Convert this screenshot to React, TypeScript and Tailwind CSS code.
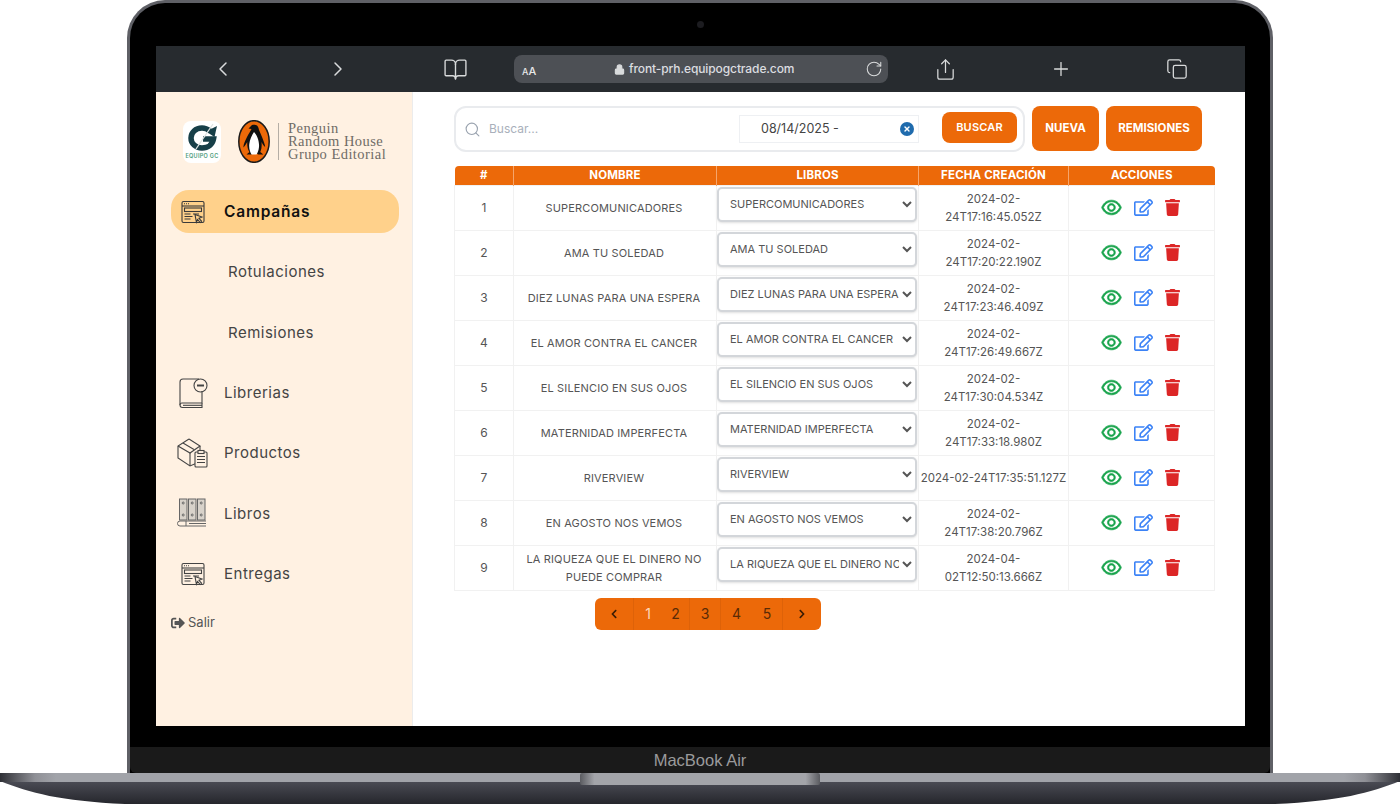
import React from "react";
import { ChevronLeft, ChevronRight, BookOpen, Share, Plus, Copy, RotateCw, Lock, Search, X } from "lucide-react";
import { AiOutlineEye } from "react-icons/ai";
import { FaRegEdit, FaTrash, FaSignOutAlt, FaChevronLeft, FaChevronRight } from "react-icons/fa";

const font = "font-['Inter','Liberation_Sans',sans-serif]";

const rows = [
  { n: 1, name: ["SUPERCOMUNICADORES"], sel: "SUPERCOMUNICADORES", date: ["2024-02-", "24T17:16:45.052Z"] },
  { n: 2, name: ["AMA TU SOLEDAD"], sel: "AMA TU SOLEDAD", date: ["2024-02-", "24T17:20:22.190Z"] },
  { n: 3, name: ["DIEZ LUNAS PARA UNA ESPERA"], sel: "DIEZ LUNAS PARA UNA ESPERA", date: ["2024-02-", "24T17:23:46.409Z"] },
  { n: 4, name: ["EL AMOR CONTRA EL CANCER"], sel: "EL AMOR CONTRA EL CANCER", date: ["2024-02-", "24T17:26:49.667Z"] },
  { n: 5, name: ["EL SILENCIO EN SUS OJOS"], sel: "EL SILENCIO EN SUS OJOS", date: ["2024-02-", "24T17:30:04.534Z"] },
  { n: 6, name: ["MATERNIDAD IMPERFECTA"], sel: "MATERNIDAD IMPERFECTA", date: ["2024-02-", "24T17:33:18.980Z"] },
  { n: 7, name: ["RIVERVIEW"], sel: "RIVERVIEW", date: ["2024-02-24T17:35:51.127Z"] },
  { n: 8, name: ["EN AGOSTO NOS VEMOS"], sel: "EN AGOSTO NOS VEMOS", date: ["2024-02-", "24T17:38:20.796Z"] },
  { n: 9, name: ["LA RIQUEZA QUE EL DINERO NO", "PUEDE COMPRAR"], sel: "LA RIQUEZA QUE EL DINERO NO PUEDE COMPRAR", date: ["2024-04-", "02T12:50:13.666Z"] },
];

function WindowIcon({ color = "#3a3a3a" }: { color?: string }) {
  return (
    <svg width="24" height="24" viewBox="0 0 24 24" fill="none" stroke={color} strokeWidth="1.1">
      <rect x="1" y="1.5" width="22" height="21" rx="1.5" />
      <path d="M1 6h22" />
      <path d="M3 3.8h1M5 3.8h1M7 3.8h1" />
      <rect x="3.5" y="8" width="17" height="3.5" />
      <path d="M3.5 14h6M3.5 16.5h8M3.5 19h6M12 14h6" />
      <path d="M14 14.5l7 2.6-3 1.2 2.6 3-1.4 1.2-2.6-3-1.2 2.6z" fill="none" />
    </svg>
  );
}

function BookMinusIcon() {
  return (
    <svg width="30" height="32" viewBox="0 0 30 32" fill="none" stroke="#444" strokeWidth="1.1">
      <path d="M21 2H5a3 3 0 0 0-3 3v23" />
      <path d="M2 28a2 2 0 0 1 2-2h20v-12" />
      <path d="M2 28a2.5 2.5 0 0 0 2.5 2.5H24V26" />
      <path d="M5 28.3h19" />
      <circle cx="22.5" cy="8.5" r="6.5" />
      <path d="M19 8.5h7" strokeWidth="2" />
    </svg>
  );
}

function BoxIcon() {
  return (
    <svg width="31" height="30" viewBox="0 0 31 30" fill="none" stroke="#444" strokeWidth="1.1">
      <path d="M12 1L1 8v12l12 8 7-3" />
      <path d="M1 8l12 7 10-7L12 1" />
      <path d="M13 15v13M23 8v6M6 5l11 6.5" />
      <rect x="18" y="14" width="12" height="15" rx="1" fill="#fff1e2" />
      <rect x="21" y="12.5" width="6" height="3" fill="#fff1e2" />
      <path d="M20 18.5h8M20 21.5h8M20 24.5h8" />
    </svg>
  );
}

function BooksIcon() {
  return (
    <svg width="30" height="30" viewBox="0 0 30 30" fill="none" stroke="#666" strokeWidth="1">
      <rect x="2.5" y="1" width="7.5" height="21" fill="#d8d2ca" />
      <rect x="11.5" y="1" width="7.5" height="21" fill="#d8d2ca" />
      <rect x="20.5" y="1" width="7.5" height="21" fill="#d8d2ca" />
      <circle cx="6.2" cy="5" r="1" /><circle cx="15.2" cy="5" r="1" /><circle cx="24.2" cy="5" r="1" />
      <circle cx="6.2" cy="17" r="1" /><circle cx="15.2" cy="17" r="1" /><circle cx="24.2" cy="17" r="1" />
      <path d="M29 23H3a2.5 2.5 0 0 0 0 5h26M9 23v5M12 25.5h17" />
    </svg>
  );
}

function GLogo() {
  return (
    <div className="w-[38px] h-[42px] bg-white rounded-lg flex flex-col items-center pt-[2px]">
      <svg width="32" height="30" viewBox="0 0 32 30" fill="none">
        <path d="M24 8C21.500 6 19 5 16 5 9.500 5 5 9.500 5 15s4.500 10 11 10c6 0 10.500-3.500 11.500-9H17" stroke="#173f48" strokeWidth="5.500" />
        <path d="M20 8.500L31 3l-2.500 11z" fill="#173f48" />
        <path d="M10 26L27 1" stroke="#dfe4e3" strokeWidth="1.3" />
      </svg>
      <span className={`text-[5.500px] leading-[7px] font-semibold text-[#4f9c7c] tracking-[0.3px] whitespace-nowrap ${font}`}>EQUIPO GC</span>
    </div>
  );
}

function PenguinLogo() {
  return (
    <svg width="32" height="43" viewBox="0 0 32 43">
      <ellipse cx="16" cy="21.500" rx="15.200" ry="20.800" fill="#ec6909" stroke="#1a1a1a" strokeWidth="1.500" />
      <path d="M14 5c3-1 6 0 6.500 3 .3 2 2 5 3.500 9 1.200 3.500 3 7 3.200 10-1.500-1-3-3.500-3.700-5 .4 4 .1 7-1.200 10l3 2.500h-5l-1.500-1h-4l-1.300 1H8.500l3-2.500C9.500 29 9 25 9.300 22c-1 1.500-2.300 4-4 5.500.2-3.500 2.200-7.500 3.700-10.500C10.500 14 12.500 11 13.500 9L10.500 8.500z" fill="#111" />
      <path d="M16 12c3 3 5.500 9 5 15-.3 3.500-1.500 6-2.500 7.500h-5C12 32 10.800 28 11.300 24c.4-4.500 2.700-9 4.700-12z" fill="#fff" />
    </svg>
  );
}

function BaseDrawing() {
  return (
    <svg width="1400" height="31" viewBox="0 0 1400 31" className="block">
      <defs>
        <linearGradient id="bodyG" x1="0" y1="0" x2="0" y2="1">
          <stop offset="0" stopColor="#4b4c55" />
          <stop offset="1" stopColor="#25262c" />
        </linearGradient>
        <linearGradient id="topG" x1="0" y1="0" x2="1" y2="0">
          <stop offset="0" stopColor="#2f3036" />
          <stop offset="0.025" stopColor="#8f9096" />
          <stop offset="0.04" stopColor="#a1a3a9" />
          <stop offset="0.96" stopColor="#a1a3a9" />
          <stop offset="0.975" stopColor="#8f9096" />
          <stop offset="1" stopColor="#2f3036" />
        </linearGradient>
        <linearGradient id="notchG" x1="0" y1="0" x2="1" y2="0">
          <stop offset="0" stopColor="#5a5b60" />
          <stop offset="0.06" stopColor="#a3a4a9" />
          <stop offset="0.94" stopColor="#a3a4a9" />
          <stop offset="1" stopColor="#5a5b60" />
        </linearGradient>
      </defs>
      <path d="M0 8 C30 20 60 28 125 31 H1275 C1340 28 1370 20 1400 8 Z" fill="url(#bodyG)" />
      <rect x="0" y="0" width="1400" height="9" fill="url(#topG)" />
      <rect x="580" y="0" width="240" height="12" rx="2" fill="url(#notchG)" />
    </svg>
  );
}

export default function App() {
  const cellBorder = "border border-[#f1f1f1]";
  const th = "bg-[#ec6909] text-white text-[11.5px] font-bold h-[19px] p-0 border-x border-[#f5a56b] border-b-0";
  return (
    <div className={`w-[1400px] h-[804px] bg-white overflow-hidden flex flex-col ${font}`}>
      {/* lid */}
      <div className="ml-[127px] w-[1146px] h-[773px] rounded-t-[38px] border-x-[3px] border-t-[3px] border-[#5f6066] bg-black flex flex-col shrink-0">
        <div className="h-[43px] flex items-center justify-center shrink-0">
          <div className="w-[7px] h-[7px] rounded-full bg-[#1c1c20]" />
        </div>
        {/* screen */}
        <div className="ml-[26px] w-[1089px] h-[680px] bg-white flex flex-col shrink-0">
          {/* browser toolbar */}
          <div className="h-[46px] bg-[#272b2f] flex items-center shrink-0 text-[#d9dbdc]">
            <ChevronLeft size={24} strokeWidth={1.5} className="ml-[55px] shrink-0" />
            <ChevronRight size={24} strokeWidth={1.5} className="ml-[91px] shrink-0" />
            <BookOpen size={25} strokeWidth={1.3} className="ml-[93px] shrink-0" />
            <div className="ml-[46px] w-[374px] h-[28px] rounded-lg bg-[#4d5055] flex items-center pl-[8px] pr-[5px] shrink-0">
              <span className="text-[#e8e8e8] font-medium w-[96px] leading-none shrink-0"><span className="text-[9px]">A</span><span className="text-[11px]">A</span></span>
              <Lock size={11} strokeWidth={2.5} fill="currentColor" className="shrink-0 ml-[-4px]" />
              <span className="ml-[4px] text-[12px] tracking-[-0.1px] font-medium text-[#dcdde0] flex-1 whitespace-nowrap">front-prh.equipogctrade.com</span>
              <RotateCw size={18} strokeWidth={1.4} className="shrink-0" />
            </div>
            <Share size={23} strokeWidth={1.3} className="ml-[46px] shrink-0" />
            <Plus size={22} strokeWidth={1.4} className="ml-[93px] shrink-0" />
            <Copy size={22} strokeWidth={1.4} className="ml-[94px] shrink-0" />
          </div>
          <div className="flex flex-1 min-h-0">
            {/* sidebar */}
            <aside className="w-[257px] shrink-0 bg-[#fff1e2] border-r border-[#ececec] pl-[15px] pr-[13px] pt-[28px]">
              <div className="flex items-center h-[43px] pl-[12px]">
                <GLogo />
                <div className="ml-[17px]"><PenguinLogo /></div>
                <div className="ml-[8px] w-px h-[37px] bg-[#b5aea5]" />
                <div className="ml-[9px] mt-[-1px] font-['Liberation_Serif',serif] text-[14.500px] tracking-[0.45px] leading-[13px] text-[#6f6c66] whitespace-nowrap">
                  Penguin<br />Random House<br />Grupo Editorial
                </div>
              </div>
              <nav className="mt-[27px] flex flex-col gap-[17.4px] text-[15px] text-[#444] tracking-[0.5px]">
                <div className="h-[43px] rounded-[18px] bg-[#ffd18b] flex items-center pl-[10px] gap-[19px] font-semibold text-[#111]">
                  <WindowIcon />
                  <span className="pt-[1px] text-[15.500px] tracking-[0.8px]">Campañas</span>
                </div>
                <div className="h-[43px] flex items-center pl-[57px]">Rotulaciones</div>
                <div className="h-[43px] flex items-center pl-[57px] pt-[2px]">Remisiones</div>
                <div className="h-[43px] flex items-center pl-[7px] gap-[16px]"><BookMinusIcon /><span className="pt-[2px]">Librerias</span></div>
                <div className="h-[43px] flex items-center pl-[6px] gap-[16px]"><BoxIcon /><span>Productos</span></div>
                <div className="h-[43px] flex items-center pl-[6px] gap-[17px]"><BooksIcon /><span className="pt-[2px]">Libros</span></div>
                <div className="h-[43px] flex items-center pl-[10px] gap-[19px]"><WindowIcon color="#444" /><span>Entregas</span></div>
              </nav>
              <div className="mt-[18px] flex items-center gap-[3px] text-[13px] text-[#555]">
                <FaSignOutAlt size={14} />
                <span>Salir</span>
              </div>
            </aside>
            {/* main */}
            <main className="flex-1 pl-[41px] pt-[14px]">
              <div className="flex items-start">
                <div className="w-[571px] h-[46px] border-2 border-[#e9ebee] rounded-xl flex items-center pl-[8px] pr-[6px]">
                  <Search size={17} strokeWidth={1.6} className="text-[#9aa3af] shrink-0" />
                  <input readOnly placeholder="Buscar..." className="ml-[8px] flex-1 min-w-0 outline-none text-[12px] placeholder:text-[#a9b0bb]" />
                  <div className="w-[180px] h-[28px] border border-[#eef0f3] flex items-center pl-[21px] pr-[4px] shrink-0">
                    <span className="flex-1 text-[12.500px] text-[#444]">08/14/2025 -</span>
                    <span className="w-[14px] h-[14px] rounded-full bg-[#1f6bad] flex items-center justify-center"><X size={8} strokeWidth={4} className="text-white" /></span>
                  </div>
                  <button className="ml-[23px] w-[75px] h-[31px] rounded-lg bg-[#ec6909] text-white text-[11px] font-semibold tracking-[0.2px] shrink-0 mt-[-3px]">BUSCAR</button>
                </div>
                <button className="ml-[7px] w-[67px] h-[45px] rounded-lg bg-[#ec6909] text-white text-[11.500px] font-bold">NUEVA</button>
                <button className="ml-[7px] w-[96px] h-[45px] rounded-lg bg-[#ec6909] text-white text-[11.500px] font-bold">REMISIONES</button>
              </div>
              <table className="mt-[14px] w-[760px] table-fixed border-collapse text-[#555] text-[11px] tracking-[0.15px]">
                <colgroup>
                  <col className="w-[59px]" />
                  <col className="w-[203px]" />
                  <col className="w-[202px]" />
                  <col className="w-[150px]" />
                  <col className="w-[146px]" />
                </colgroup>
                <thead>
                  <tr>
                    <th className={`${th} rounded-tl-[4px] border-l-0`}>#</th>
                    <th className={th}>NOMBRE</th>
                    <th className={th}>LIBROS</th>
                    <th className={th}>FECHA CREACIÓN</th>
                    <th className={`${th} rounded-tr-[4px] border-r-0`}>ACCIONES</th>
                  </tr>
                </thead>
                <tbody>
                  {rows.map((r) => (
                    <tr key={r.n} className="h-[45px]">
                      <td className={`${cellBorder} text-center text-[12px]`}>{r.n}</td>
                      <td className={`${cellBorder} text-center leading-[18px] pr-[2px]`}>
                        {r.name.map((l) => <div key={l} className="whitespace-nowrap">{l}</div>)}
                      </td>
                      <td className={`${cellBorder} px-0 pt-[1px] align-top`}>
                        <select className="block w-[200px] h-[35px] bg-white border-2 border-[#d3d6da] rounded-[5px] pl-[7px] text-[11px] tracking-normal text-[#555] shadow-sm">
                          <option>{r.sel}</option>
                        </select>
                      </td>
                      <td className={`${cellBorder} text-center text-[11.500px] tracking-normal leading-[18px] text-[#555]`}>
                        {r.date.map((l) => <div key={l} className="whitespace-nowrap">{l}</div>)}
                      </td>
                      <td className={cellBorder}>
                        <div className="flex items-center justify-center gap-[11px] mb-[1px] mr-[2px]">
                          <AiOutlineEye size={23} stroke="currentColor" strokeWidth={30} className="text-[#16a34a]" />
                          <FaRegEdit size={19} className="text-[#3b82f6]" />
                          <FaTrash size={17} className="text-[#dc2626]" />
                        </div>
                      </td>
                    </tr>
                  ))}
                </tbody>
              </table>
              <div className="mt-[7px] ml-[141px] w-[226px] h-[32px] rounded-md bg-[#ec6909] flex items-stretch text-[14px] text-[#5a2b06]">
                <div className="w-[39px] flex items-center justify-center border-r border-[#de6208] text-[#3a1c04]"><FaChevronLeft size={10} /></div>
                <div className="w-[28px] flex items-center justify-center text-[#ffd9bb]">1</div>
                <div className="w-[28px] flex items-center justify-center border-r border-[#de6208]">2</div>
                <div className="w-[31px] flex items-center justify-center border-r border-[#de6208]">3</div>
                <div className="w-[31px] flex items-center justify-center">4</div>
                <div className="w-[31px] flex items-center justify-center border-r border-[#de6208]">5</div>
                <div className="flex-1 flex items-center justify-center text-[#3a1c04]"><FaChevronRight size={10} /></div>
              </div>
            </main>
          </div>
        </div>
        <div className="h-[21px] shrink-0" />
        <div className="flex-1 bg-[#1a1a1a] rounded-b-[6px] flex items-center justify-center pt-[1px] font-['Liberation_Sans',sans-serif] text-[16.500px] text-[#9a9a9c]">MacBook Air</div>
      </div>
      <BaseDrawing />
    </div>
  );
}
